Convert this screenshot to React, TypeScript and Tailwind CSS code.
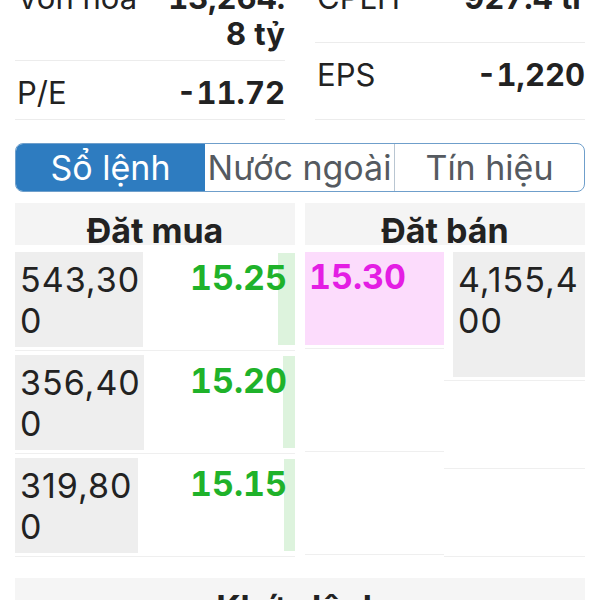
import React from "react";

type BuyRow = { vol: [string, string]; price: string; volW: string; bar: number; first?: boolean };

const buyRows: BuyRow[] = [
  { vol: ["543,30", "0"], price: "15.25", volW: "w-[128px]", bar: 17, first: true },
  { vol: ["356,40", "0"], price: "15.20", volW: "w-[129px]", bar: 12 },
  { vol: ["319,80", "0"], price: "15.15", volW: "w-[123px]", bar: 11 },
];

function StatRow({ label, value, grow }: { label: string; value: React.ReactNode; grow?: boolean }) {
  return (
    <div
      className={`flex justify-between items-start pt-[14px] pb-[8px] border-b border-[#ececec] text-[31px] leading-[36px] ${
        grow ? "flex-1" : ""
      }`}
    >
      <span className="pl-[2px]">{label}</span>
      <span className="font-bold text-right tabular-nums">{value}</span>
    </div>
  );
}

export default function App() {
  return (
    <div className="w-[600px] h-[600px] overflow-hidden bg-white font-['Inter',sans-serif] text-[#222]">
      <div className="-mt-[34px] px-[15px]">
        {/* stats */}
        <div className="grid grid-cols-2 gap-x-[30px]">
          <div className="flex flex-col">
            <StatRow
              label="Vốn hóa"
              value={
                <>
                  13,264.
                  <br />8 tỷ
                </>
              }
            />
            <StatRow label="P/E" value="-11.72" />
          </div>
          <div className="flex flex-col">
            <StatRow label="CPLH" value="927.4 tr" grow />
            <StatRow label="EPS" value="-1,220" grow />
          </div>
        </div>

        {/* tabs */}
        <div className="mt-[23px] flex h-[49px] rounded-[8px] border border-[#6f9fcb] overflow-hidden text-[34px]">
          <div className="flex-1 flex items-center justify-center bg-[#2e7cc0] text-white">Sổ lệnh</div>
          <div className="flex-1 flex items-center justify-center text-[#555a60] whitespace-nowrap">Nước ngoài</div>
          <div className="flex-1 flex items-center justify-center text-[#555a60] border-l border-[#b9c6d2]">
            Tín hiệu
          </div>
        </div>

        {/* order book */}
        <div className="mt-[11px] grid grid-cols-2 gap-x-[10px]">
          <div className="h-[42px] bg-[#f4f4f4] text-center font-bold text-[34px] leading-[36px] pt-[10px]">
            Đăt mua
          </div>
          <div className="h-[42px] bg-[#f4f4f4] text-center font-bold text-[34px] leading-[36px] pt-[10px]">
            Đăt bán
          </div>

          {/* buy side */}
          <div className="mt-[7px] flex flex-col text-[34px] leading-[41px]">
            {buyRows.map((r) => (
              <div
                key={r.price}
                className={`flex items-stretch border-b border-[#efefef] pb-[3px] ${r.first ? "" : "pt-[4px]"}`}
              >
                <div className={`${r.volW} bg-[#eeeeee] pl-[5px] pt-[7px] pb-[6px] tracking-[1px] whitespace-nowrap`}>
                  {r.vol[0]}
                  <br />
                  {r.vol[1]}
                </div>
                <div className="flex-1 relative">
                  <div
                    className="absolute right-0 top-[1px] bottom-[2px] bg-[#ddf3dd]"
                    style={{ width: r.bar }}
                  />
                  <div className="relative text-right pr-[8px] pt-[5px] font-bold tabular-nums text-[#1fb22a]">
                    {r.price}
                  </div>
                </div>
              </div>
            ))}
          </div>

          {/* sell side */}
          <div className="mt-[7px] flex text-[34px] leading-[41px]">
            <div className="w-[139px] flex flex-col">
              <div className="border-b border-[#efefef] pb-[3px]">
                <div className="h-[93px] bg-[#fcdcfc] pl-[4px] pt-[4px] font-bold tabular-nums text-[#e41de4]">
                  15.30
                </div>
              </div>
              <div className="h-[103px] border-b border-[#efefef]" />
              <div className="h-[103px] border-b border-[#efefef]" />
            </div>
            <div className="flex-1 flex flex-col">
              <div className="border-b border-[#efefef] pb-[3px]">
                <div className="ml-[9px] h-[125px] bg-[#eeeeee] pl-[5px] pt-[7px] tracking-[1px] whitespace-nowrap">
                  4,155,4
                  <br />
                  00
                </div>
              </div>
              <div className="h-[88px] border-b border-[#efefef]" />
              <div className="h-[88px] border-b border-[#efefef]" />
            </div>
          </div>

          <div className="col-span-2 mt-[21px] h-[60px] bg-[#f5f5f5] text-center font-bold text-[34px] leading-[36px] pt-[12px]">
            Khớp lệnh
          </div>
        </div>
      </div>
    </div>
  );
}
